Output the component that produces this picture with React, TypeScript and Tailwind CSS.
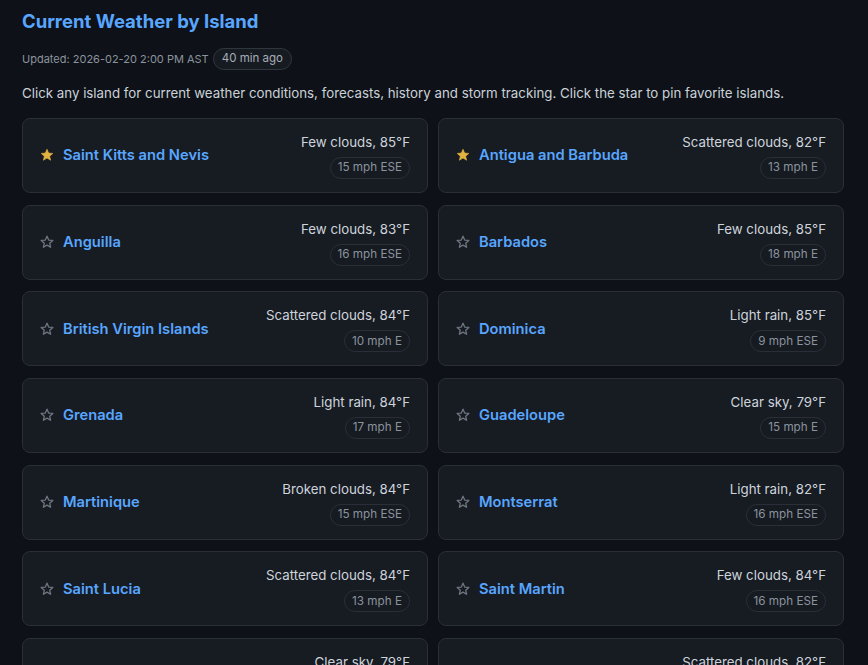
import React from "react";

interface Island {
  name: string;
  sky: string;
  temp: number;
  wind: string;
  favorite?: boolean;
}

const islands: Island[] = [
  { name: "Saint Kitts and Nevis", sky: "Few clouds", temp: 85, wind: "15 mph ESE", favorite: true },
  { name: "Antigua and Barbuda", sky: "Scattered clouds", temp: 82, wind: "13 mph E", favorite: true },
  { name: "Anguilla", sky: "Few clouds", temp: 83, wind: "16 mph ESE" },
  { name: "Barbados", sky: "Few clouds", temp: 85, wind: "18 mph E" },
  { name: "British Virgin Islands", sky: "Scattered clouds", temp: 84, wind: "10 mph E" },
  { name: "Dominica", sky: "Light rain", temp: 85, wind: "9 mph ESE" },
  { name: "Grenada", sky: "Light rain", temp: 84, wind: "17 mph E" },
  { name: "Guadeloupe", sky: "Clear sky", temp: 79, wind: "15 mph E" },
  { name: "Martinique", sky: "Broken clouds", temp: 84, wind: "15 mph ESE" },
  { name: "Montserrat", sky: "Light rain", temp: 82, wind: "16 mph ESE" },
  { name: "Saint Lucia", sky: "Scattered clouds", temp: 84, wind: "13 mph E" },
  { name: "Saint Martin", sky: "Few clouds", temp: 84, wind: "16 mph ESE" },
  { name: "Saint Vincent and the Grenadines", sky: "Clear sky", temp: 79, wind: "14 mph E" },
  { name: "Sint Maarten", sky: "Scattered clouds", temp: 82, wind: "16 mph ESE" },
];

function StarIcon({ filled }: { filled?: boolean }) {
  // five-point star, filled gold for pinned islands, outlined grey otherwise
  return (
    <svg width="14" height="14" viewBox="0 0 24 24" className="shrink-0">
      <polygon
        points="12,2 14.9,8.6 22,9.3 16.6,14 18.2,21 12,17.3 5.8,21 7.4,14 2,9.3 9.1,8.6"
        fill={filled ? "#e3b341" : "none"}
        stroke={filled ? "#e3b341" : "#6e7681"}
        strokeWidth={filled ? 1 : 2.2}
        strokeLinejoin="round"
      />
    </svg>
  );
}

function IslandCard({ island }: { island: Island }) {
  return (
    <div className="h-[75px] rounded-lg border border-[#2a2f37] bg-[#171b22] pl-[17px] pr-[17px] flex items-center justify-between cursor-pointer">
      <div className="flex items-center gap-[9px]">
        <StarIcon filled={island.favorite} />
        <span className="text-[14.7px] font-semibold text-[#58a6ff]">{island.name}</span>
      </div>
      <div className="flex flex-col items-end gap-[5px]">
        <span className="text-[13.3px] leading-[20px] text-[#cdd4dc]">
          {island.sky}, {island.temp}°F
        </span>
        <span className="rounded-full border border-[#2a2f37] bg-[#161a21] px-[7px] h-[22px] flex items-center text-[11.7px] text-[#8b949e]">
          {island.wind}
        </span>
      </div>
    </div>
  );
}

export default function App() {
  return (
    <div
      className="min-h-screen bg-[#0e1117] text-[#c9d1d9] pl-[22px] pr-[24px] pt-[8px] pb-8"
      style={{ fontFamily: "Inter, 'Noto Sans', sans-serif" }}
    >
      <h1 className="text-[18.5px] font-bold leading-[26px] text-[#58a6ff]">
        Current Weather by Island
      </h1>
      <div className="mt-[14px] flex items-center gap-[4px]">
        <span className="text-[11px] text-[#8b949e]">Updated: 2026-02-20 2:00 PM AST</span>
        <span className="rounded-full border border-[#30363d] bg-[#161b22] h-[22px] px-[8px] flex items-center text-[11.5px] text-[#a6adb6]">
          40 min ago
        </span>
      </div>
      <p className="mt-[13px] text-[13.3px] leading-[20px] text-[#c9d1d9]">
        Click any island for current weather conditions, forecasts, history and storm tracking.
        Click the star to pin favorite islands.
      </p>
      <div className="mt-[15px] grid grid-cols-2 gap-x-[10px] gap-y-[11.67px]">
        {islands.map((island) => (
          <IslandCard key={island.name} island={island} />
        ))}
      </div>
    </div>
  );
}
